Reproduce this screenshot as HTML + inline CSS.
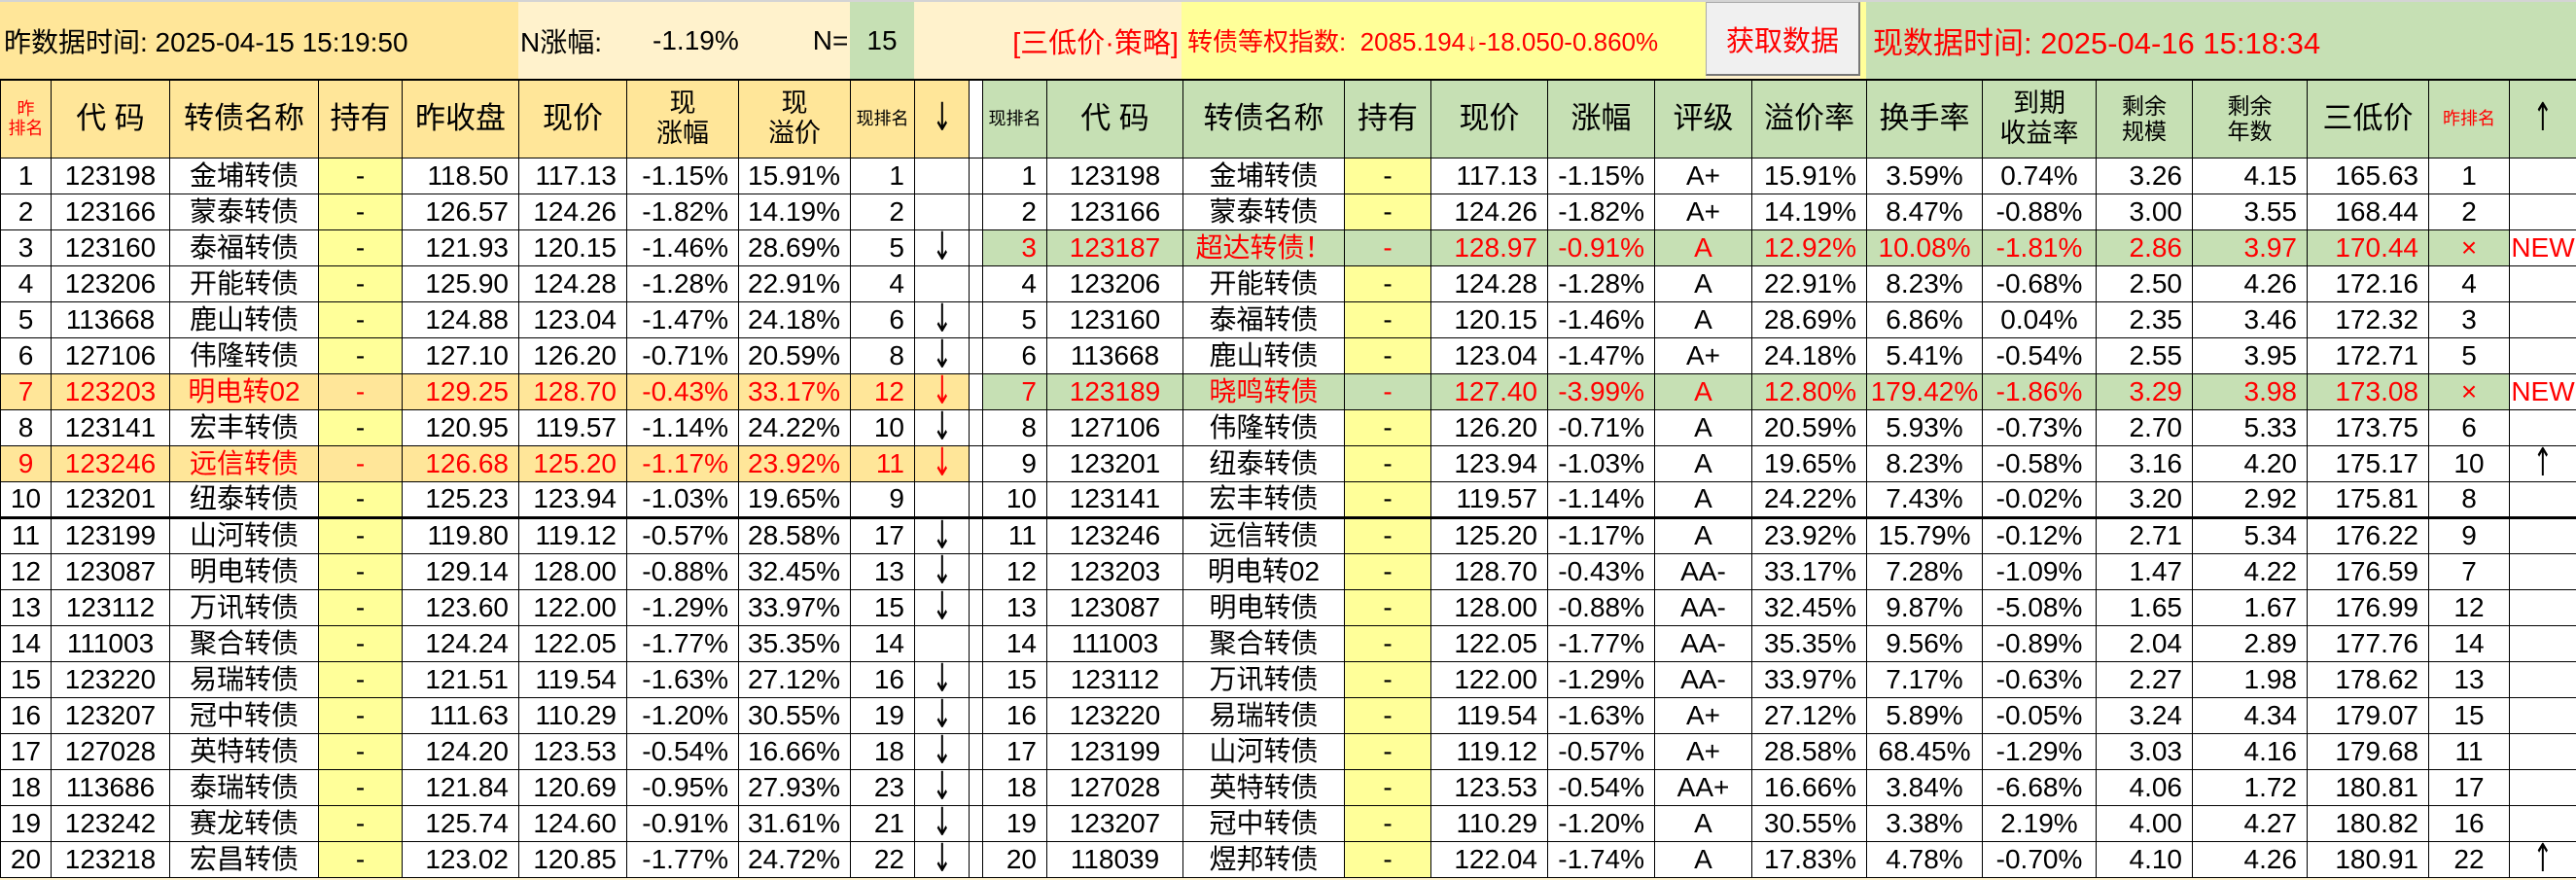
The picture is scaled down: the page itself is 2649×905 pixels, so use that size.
<!DOCTYPE html>
<html><head><meta charset="utf-8"><style>
*{margin:0;padding:0;box-sizing:border-box}
body{width:2649px;height:905px;overflow:hidden;background:#FFF2CC;font-family:"Liberation Sans","Noto Sans CJK SC",sans-serif;position:relative}
.top{position:absolute;top:0;height:81px;display:flex;align-items:center;white-space:nowrap;overflow:hidden}
table{position:absolute;top:81px;left:0;width:2649px;border-collapse:collapse;table-layout:fixed;font-size:28px}
tr{height:37px}
td{border:1px solid #000;height:37px;max-height:37px;padding:0 10px 0 0;text-align:right;white-space:nowrap;overflow:hidden;background:#fff;line-height:32px}
td.c{text-align:center;padding:0}
tr.h{height:80px}
tr.h td{height:80px;max-height:80px;background:#FFE699;text-align:center;padding:0;font-size:31px;line-height:1.15;border-top:2px solid #000}
tr.h td.g{background:#C6E0B4}
tr.h td.w{background:#fff}
td.y{background:#FFFF99}
td.sp{padding:0}
tr.o td{background:#FFE699;color:#f00}
tr.o td.sp{background:#fff}
tr.o td.r,tr.o td.y.r{background:#fff;color:#000}
tr.gr td{color:#f00}
tr.gr td.rr{background:#C6E0B4;color:#f00}
tr.tk td{border-bottom:3px solid #000}
.s{font-size:23px!important}.xs{font-size:18px!important}.m{font-size:27px!important}
.red{color:#f00}
.a{font-size:40px;height:35px;line-height:35px;overflow:hidden;vertical-align:top;font-family:"DejaVu Sans",sans-serif;display:inline-block;transform:scaleX(0.6)}
</style></head><body>
<div style="position:absolute;top:0;left:0;width:2649px;height:2px;background:#d4d4d4"></div>
<div class="top" style="left:0;width:533px;background:#FFE699;font-size:28px;padding-left:4px;top:2px;height:79px">昨数据时间: 2025-04-15 15:19:50</div>
<div class="top" style="left:533px;width:341px;background:#FFF2CC;font-size:28px;top:2px;height:79px"><span style="margin-left:2px">N涨幅:</span><span style="margin-left:52px">-1.19%</span><span style="margin-left:76px">N=</span></div>
<div class="top" style="left:874px;width:66px;background:#C6E0B4;font-size:28px;justify-content:center;top:2px;height:79px">15</div>
<div class="top" style="left:940px;width:275px;background:#FFF2CC;font-size:29px;color:#f00;justify-content:flex-end;padding-right:3px;top:2px;height:79px">[三低价·策略]</div>
<div class="top" style="left:1215px;width:539px;background:#FFFF99;font-size:26px;color:#f00;padding-left:6px;top:2px;height:79px">转债等权指数:&nbsp;&nbsp;2085.194↓-18.050-0.860%</div>
<div class="top" style="left:1754px;width:159px;top:2px;height:76px;background:#F0F0F0;border:1px solid #aaa;border-right:2px solid #777;border-bottom:2px solid #777;font-size:29px;color:#f00;justify-content:center">获取数据</div>
<div class="top" style="left:1913px;width:6px;background:#FFFF99;top:2px;height:79px"></div>
<div class="top" style="left:1919px;width:730px;background:#C6E0B4;font-size:31px;color:#f00;padding-left:7px;top:2px;height:79px">现数据时间: 2025-04-16 15:18:34</div>
<table>
<colgroup><col style="width:52px"><col style="width:122px"><col style="width:153px"><col style="width:86px"><col style="width:120px"><col style="width:111px"><col style="width:115px"><col style="width:115px"><col style="width:66px"><col style="width:56px"><col style="width:14px"><col style="width:66px"><col style="width:140px"><col style="width:166px"><col style="width:89px"><col style="width:120px"><col style="width:110px"><col style="width:100px"><col style="width:118px"><col style="width:119px"><col style="width:117px"><col style="width:99px"><col style="width:118px"><col style="width:125px"><col style="width:83px"><col style="width:69px"></colgroup>
<tr class="h"><td class="xs red">昨<br>排名</td><td>代 码</td><td>转债名称</td><td>持有</td><td>昨收盘</td><td>现价</td><td class="m">现<br>涨幅</td><td class="m">现<br>溢价</td><td class="xs">现排名</td><td><span class="a">↓</span></td><td class="w"></td><td class="g xs">现排名</td><td class="g">代 码</td><td class="g">转债名称</td><td class="g">持有</td><td class="g">现价</td><td class="g">涨幅</td><td class="g">评级</td><td class="g">溢价率</td><td class="g">换手率</td><td class="g m">到期<br>收益率</td><td class="g s">剩余<br>规模</td><td class="g s">剩余<br>年数</td><td class="g">三低价</td><td class="g xs red">昨排名</td><td class="g"><span class="a">↑</span></td></tr>
<tr><td class="c">1</td><td class="c">123198</td><td class="c">金埔转债</td><td class="c y">-</td><td>118.50</td><td>117.13</td><td>-1.15%</td><td>15.91%</td><td>1</td><td class="c"></td><td class="sp"></td><td class="rr">1</td><td class="c rr">123198</td><td class="c rr">金埔转债</td><td class="c y">-</td><td class="rr">117.13</td><td class="rr">-1.15%</td><td class="c rr">A+</td><td class="rr">15.91%</td><td class="c rr">3.59%</td><td class="c rr">0.74%</td><td class="rr">3.26</td><td class="rr">4.15</td><td class="rr">165.63</td><td class="c rr">1</td><td class="c rr"></td></tr>
<tr><td class="c">2</td><td class="c">123166</td><td class="c">蒙泰转债</td><td class="c y">-</td><td>126.57</td><td>124.26</td><td>-1.82%</td><td>14.19%</td><td>2</td><td class="c"></td><td class="sp"></td><td class="rr">2</td><td class="c rr">123166</td><td class="c rr">蒙泰转债</td><td class="c y">-</td><td class="rr">124.26</td><td class="rr">-1.82%</td><td class="c rr">A+</td><td class="rr">14.19%</td><td class="c rr">8.47%</td><td class="c rr">-0.88%</td><td class="rr">3.00</td><td class="rr">3.55</td><td class="rr">168.44</td><td class="c rr">2</td><td class="c rr"></td></tr>
<tr class="gr"><td class="c" style="color:#000">3</td><td class="c" style="color:#000">123160</td><td class="c" style="color:#000">泰福转债</td><td class="c y" style="color:#000">-</td><td style="color:#000">121.93</td><td style="color:#000">120.15</td><td style="color:#000">-1.46%</td><td style="color:#000">28.69%</td><td style="color:#000">5</td><td class="c" style="color:#000"><span class="a">↓</span></td><td class="sp"></td><td class="rr">3</td><td class="c rr">123187</td><td class="c rr">超达转债！</td><td class="c rr">-</td><td class="rr">128.97</td><td class="rr">-0.91%</td><td class="c rr">A</td><td class="rr">12.92%</td><td class="c rr">10.08%</td><td class="c rr">-1.81%</td><td class="rr">2.86</td><td class="rr">3.97</td><td class="rr">170.44</td><td class="c rr">×</td><td class="c" style="background:#fff;color:#f00">NEW</td></tr>
<tr><td class="c">4</td><td class="c">123206</td><td class="c">开能转债</td><td class="c y">-</td><td>125.90</td><td>124.28</td><td>-1.28%</td><td>22.91%</td><td>4</td><td class="c"></td><td class="sp"></td><td>4</td><td class="c">123206</td><td class="c">开能转债</td><td class="c y">-</td><td>124.28</td><td>-1.28%</td><td class="c">A</td><td>22.91%</td><td class="c">8.23%</td><td class="c">-0.68%</td><td>2.50</td><td>4.26</td><td>172.16</td><td class="c">4</td><td class="c"></td></tr>
<tr><td class="c">5</td><td class="c">113668</td><td class="c">鹿山转债</td><td class="c y">-</td><td>124.88</td><td>123.04</td><td>-1.47%</td><td>24.18%</td><td>6</td><td class="c"><span class="a">↓</span></td><td class="sp"></td><td>5</td><td class="c">123160</td><td class="c">泰福转债</td><td class="c y">-</td><td>120.15</td><td>-1.46%</td><td class="c">A</td><td>28.69%</td><td class="c">6.86%</td><td class="c">0.04%</td><td>2.35</td><td>3.46</td><td>172.32</td><td class="c">3</td><td class="c"></td></tr>
<tr><td class="c">6</td><td class="c">127106</td><td class="c">伟隆转债</td><td class="c y">-</td><td>127.10</td><td>126.20</td><td>-0.71%</td><td>20.59%</td><td>8</td><td class="c"><span class="a">↓</span></td><td class="sp"></td><td>6</td><td class="c">113668</td><td class="c">鹿山转债</td><td class="c y">-</td><td>123.04</td><td>-1.47%</td><td class="c">A+</td><td>24.18%</td><td class="c">5.41%</td><td class="c">-0.54%</td><td>2.55</td><td>3.95</td><td>172.71</td><td class="c">5</td><td class="c"></td></tr>
<tr class="o gr"><td class="c">7</td><td class="c">123203</td><td class="c">明电转02</td><td class="c">-</td><td>129.25</td><td>128.70</td><td>-0.43%</td><td>33.17%</td><td>12</td><td class="c"><span class="a">↓</span></td><td class="sp"></td><td class="rr">7</td><td class="c rr">123189</td><td class="c rr">晓鸣转债</td><td class="c rr">-</td><td class="rr">127.40</td><td class="rr">-3.99%</td><td class="c rr">A</td><td class="rr">12.80%</td><td class="c rr">179.42%</td><td class="c rr">-1.86%</td><td class="rr">3.29</td><td class="rr">3.98</td><td class="rr">173.08</td><td class="c rr">×</td><td class="c" style="background:#fff;color:#f00">NEW</td></tr>
<tr><td class="c">8</td><td class="c">123141</td><td class="c">宏丰转债</td><td class="c y">-</td><td>120.95</td><td>119.57</td><td>-1.14%</td><td>24.22%</td><td>10</td><td class="c"><span class="a">↓</span></td><td class="sp"></td><td>8</td><td class="c">127106</td><td class="c">伟隆转债</td><td class="c y">-</td><td>126.20</td><td>-0.71%</td><td class="c">A</td><td>20.59%</td><td class="c">5.93%</td><td class="c">-0.73%</td><td>2.70</td><td>5.33</td><td>173.75</td><td class="c">6</td><td class="c"></td></tr>
<tr class="o"><td class="c">9</td><td class="c">123246</td><td class="c">远信转债</td><td class="c">-</td><td>126.68</td><td>125.20</td><td>-1.17%</td><td>23.92%</td><td>11</td><td class="c"><span class="a">↓</span></td><td class="sp"></td><td class="r">9</td><td class="c r">123201</td><td class="c r">纽泰转债</td><td class="c y r" style="background:#FFFF99">-</td><td class="r">123.94</td><td class="r">-1.03%</td><td class="c r">A</td><td class="r">19.65%</td><td class="c r">8.23%</td><td class="c r">-0.58%</td><td class="r">3.16</td><td class="r">4.20</td><td class="r">175.17</td><td class="c r">10</td><td class="c r"><span class="a">↑</span></td></tr>
<tr class="tk"><td class="c">10</td><td class="c">123201</td><td class="c">纽泰转债</td><td class="c y">-</td><td>125.23</td><td>123.94</td><td>-1.03%</td><td>19.65%</td><td>9</td><td class="c"></td><td class="sp"></td><td>10</td><td class="c">123141</td><td class="c">宏丰转债</td><td class="c y">-</td><td>119.57</td><td>-1.14%</td><td class="c">A</td><td>24.22%</td><td class="c">7.43%</td><td class="c">-0.02%</td><td>3.20</td><td>2.92</td><td>175.81</td><td class="c">8</td><td class="c"></td></tr>
<tr><td class="c">11</td><td class="c">123199</td><td class="c">山河转债</td><td class="c y">-</td><td>119.80</td><td>119.12</td><td>-0.57%</td><td>28.58%</td><td>17</td><td class="c"><span class="a">↓</span></td><td class="sp"></td><td>11</td><td class="c">123246</td><td class="c">远信转债</td><td class="c y">-</td><td>125.20</td><td>-1.17%</td><td class="c">A</td><td>23.92%</td><td class="c">15.79%</td><td class="c">-0.12%</td><td>2.71</td><td>5.34</td><td>176.22</td><td class="c">9</td><td class="c"></td></tr>
<tr><td class="c">12</td><td class="c">123087</td><td class="c">明电转债</td><td class="c y">-</td><td>129.14</td><td>128.00</td><td>-0.88%</td><td>32.45%</td><td>13</td><td class="c"><span class="a">↓</span></td><td class="sp"></td><td>12</td><td class="c">123203</td><td class="c">明电转02</td><td class="c y">-</td><td>128.70</td><td>-0.43%</td><td class="c">AA-</td><td>33.17%</td><td class="c">7.28%</td><td class="c">-1.09%</td><td>1.47</td><td>4.22</td><td>176.59</td><td class="c">7</td><td class="c"></td></tr>
<tr><td class="c">13</td><td class="c">123112</td><td class="c">万讯转债</td><td class="c y">-</td><td>123.60</td><td>122.00</td><td>-1.29%</td><td>33.97%</td><td>15</td><td class="c"><span class="a">↓</span></td><td class="sp"></td><td>13</td><td class="c">123087</td><td class="c">明电转债</td><td class="c y">-</td><td>128.00</td><td>-0.88%</td><td class="c">AA-</td><td>32.45%</td><td class="c">9.87%</td><td class="c">-5.08%</td><td>1.65</td><td>1.67</td><td>176.99</td><td class="c">12</td><td class="c"></td></tr>
<tr><td class="c">14</td><td class="c">111003</td><td class="c">聚合转债</td><td class="c y">-</td><td>124.24</td><td>122.05</td><td>-1.77%</td><td>35.35%</td><td>14</td><td class="c"></td><td class="sp"></td><td>14</td><td class="c">111003</td><td class="c">聚合转债</td><td class="c y">-</td><td>122.05</td><td>-1.77%</td><td class="c">AA-</td><td>35.35%</td><td class="c">9.56%</td><td class="c">-0.89%</td><td>2.04</td><td>2.89</td><td>177.76</td><td class="c">14</td><td class="c"></td></tr>
<tr><td class="c">15</td><td class="c">123220</td><td class="c">易瑞转债</td><td class="c y">-</td><td>121.51</td><td>119.54</td><td>-1.63%</td><td>27.12%</td><td>16</td><td class="c"><span class="a">↓</span></td><td class="sp"></td><td>15</td><td class="c">123112</td><td class="c">万讯转债</td><td class="c y">-</td><td>122.00</td><td>-1.29%</td><td class="c">AA-</td><td>33.97%</td><td class="c">7.17%</td><td class="c">-0.63%</td><td>2.27</td><td>1.98</td><td>178.62</td><td class="c">13</td><td class="c"></td></tr>
<tr><td class="c">16</td><td class="c">123207</td><td class="c">冠中转债</td><td class="c y">-</td><td>111.63</td><td>110.29</td><td>-1.20%</td><td>30.55%</td><td>19</td><td class="c"><span class="a">↓</span></td><td class="sp"></td><td>16</td><td class="c">123220</td><td class="c">易瑞转债</td><td class="c y">-</td><td>119.54</td><td>-1.63%</td><td class="c">A+</td><td>27.12%</td><td class="c">5.89%</td><td class="c">-0.05%</td><td>3.24</td><td>4.34</td><td>179.07</td><td class="c">15</td><td class="c"></td></tr>
<tr><td class="c">17</td><td class="c">127028</td><td class="c">英特转债</td><td class="c y">-</td><td>124.20</td><td>123.53</td><td>-0.54%</td><td>16.66%</td><td>18</td><td class="c"><span class="a">↓</span></td><td class="sp"></td><td>17</td><td class="c">123199</td><td class="c">山河转债</td><td class="c y">-</td><td>119.12</td><td>-0.57%</td><td class="c">A+</td><td>28.58%</td><td class="c">68.45%</td><td class="c">-1.29%</td><td>3.03</td><td>4.16</td><td>179.68</td><td class="c">11</td><td class="c"></td></tr>
<tr><td class="c">18</td><td class="c">113686</td><td class="c">泰瑞转债</td><td class="c y">-</td><td>121.84</td><td>120.69</td><td>-0.95%</td><td>27.93%</td><td>23</td><td class="c"><span class="a">↓</span></td><td class="sp"></td><td>18</td><td class="c">127028</td><td class="c">英特转债</td><td class="c y">-</td><td>123.53</td><td>-0.54%</td><td class="c">AA+</td><td>16.66%</td><td class="c">3.84%</td><td class="c">-6.68%</td><td>4.06</td><td>1.72</td><td>180.81</td><td class="c">17</td><td class="c"></td></tr>
<tr><td class="c">19</td><td class="c">123242</td><td class="c">赛龙转债</td><td class="c y">-</td><td>125.74</td><td>124.60</td><td>-0.91%</td><td>31.61%</td><td>21</td><td class="c"><span class="a">↓</span></td><td class="sp"></td><td>19</td><td class="c">123207</td><td class="c">冠中转债</td><td class="c y">-</td><td>110.29</td><td>-1.20%</td><td class="c">A</td><td>30.55%</td><td class="c">3.38%</td><td class="c">2.19%</td><td>4.00</td><td>4.27</td><td>180.82</td><td class="c">16</td><td class="c"></td></tr>
<tr><td class="c">20</td><td class="c">123218</td><td class="c">宏昌转债</td><td class="c y">-</td><td>123.02</td><td>120.85</td><td>-1.77%</td><td>24.72%</td><td>22</td><td class="c"><span class="a">↓</span></td><td class="sp"></td><td>20</td><td class="c">118039</td><td class="c">煜邦转债</td><td class="c y">-</td><td>122.04</td><td>-1.74%</td><td class="c">A</td><td>17.83%</td><td class="c">4.78%</td><td class="c">-0.70%</td><td>4.10</td><td>4.26</td><td>180.91</td><td class="c">22</td><td class="c"><span class="a">↑</span></td></tr>
</table>
</body></html>
